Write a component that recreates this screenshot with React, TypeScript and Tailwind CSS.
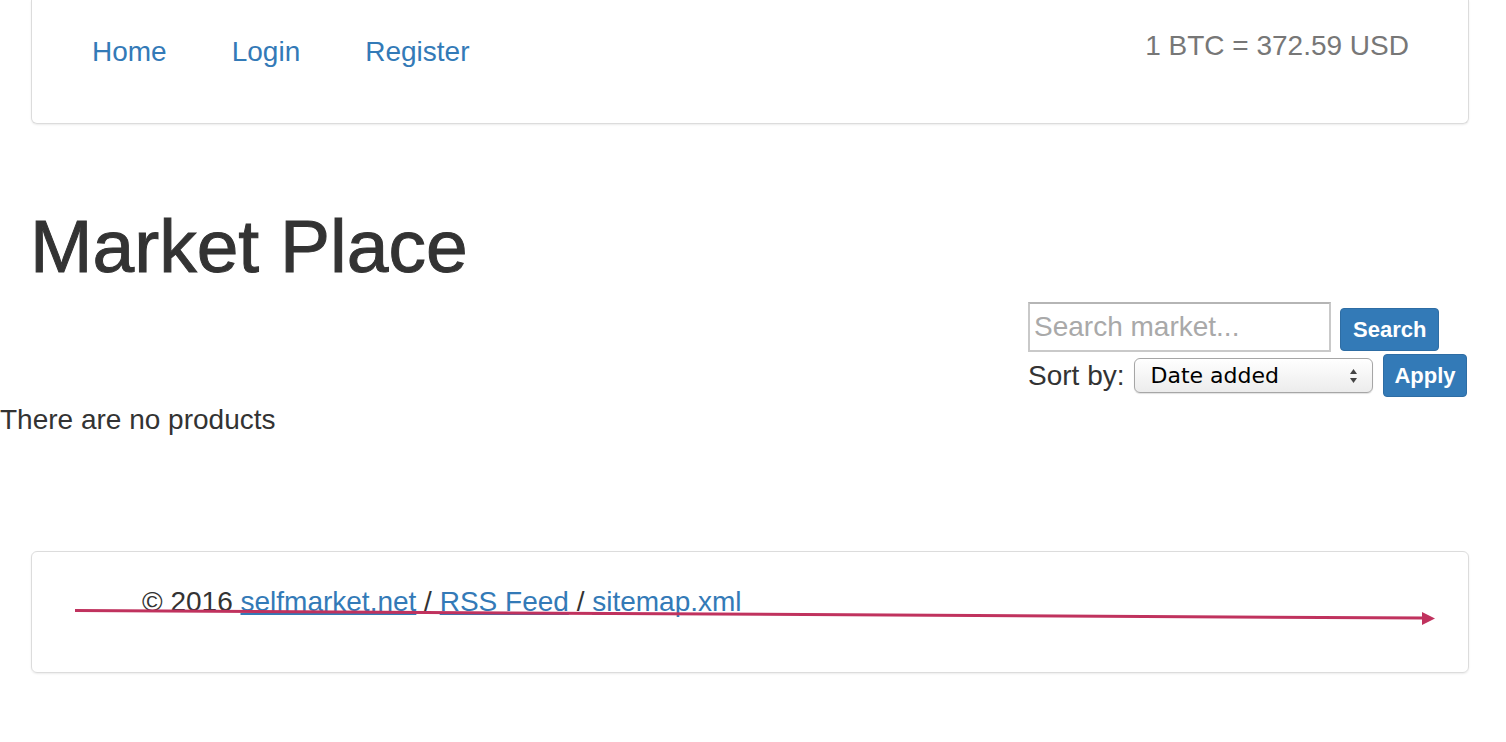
import React from 'react';

const linkCls = 'text-[#337ab7]';

const SortArrows: React.FC = () => (
  <svg width="9" height="16" viewBox="0 0 9 16" className="block">
    <path d="M4.5 1 L8 6 L1 6 Z" fill="#444" />
    <path d="M4.5 15 L8 10 L1 10 Z" fill="#444" />
  </svg>
);

const App: React.FC = () => {
  return (
    <div className="relative min-h-screen bg-white text-[#333] text-[28px] leading-[40px] font-['Liberation_Sans',Arial,sans-serif]">
      <div className="ml-[31px] mr-[37px]">
        {/* top navbar */}
        <nav className="h-[124px] border-x border-b border-[#dcdcdc] rounded-b-[6px] shadow-[0_1px_2px_rgba(0,0,0,0.08)] flex justify-between pl-[60px] pr-[59px]">
          <ul className="flex gap-[65px] pt-[32px]">
            <li><a className={linkCls}>Home</a></li>
            <li><a className={linkCls}>Login</a></li>
            <li><a className={linkCls}>Register</a></li>
          </ul>
          <div className="pt-[26px] text-[#777]">1 BTC = 372.59 USD</div>
        </nav>

        <h1 className="mt-[82px] -ml-px text-[75px] leading-[81px] font-medium text-[#333] [-webkit-text-stroke:1px_#333]">
          Market Place
        </h1>

        {/* search / sort form */}
        <div className="mt-[15px] flex justify-end mr-[2px]">
          <div className="w-[439px] flex flex-col gap-[2px]">
            <div className="flex items-end gap-[9px]">
              <input
                placeholder="Search market..."
                className="w-[303px] h-[50px] border-2 border-[#c9c9c9] border-t-[#b5b5b5] px-[4px] text-[28px] text-[#333] placeholder:text-[#a9a9a9] outline-none"
              />
              <button className="mb-px h-[43px] px-[12px] rounded-[4px] bg-[#337ab7] border border-[#2e6da4] text-white text-[22px] font-bold">
                Search
              </button>
            </div>
            <div className="flex items-center gap-[10px] whitespace-nowrap">
              <span className="shrink-0">Sort by:</span>
              <div className="shrink-0 w-[239px] h-[35px] rounded-[6px] border border-[#a6a6a6] bg-gradient-to-b from-white to-[#ececec] shadow-[0_1px_1px_rgba(0,0,0,0.12)] flex items-center justify-between pl-[15px] pr-[14px] text-black text-[22px] font-['DejaVu_Sans',sans-serif]">
                <span className="leading-none">Date added</span>
                <SortArrows />
              </div>
              <button className="shrink-0 h-[43px] px-[10px] rounded-[4px] bg-[#337ab7] border border-[#2e6da4] text-white text-[22px] font-bold">
                Apply
              </button>
            </div>
          </div>
        </div>
      </div>

      <p className="mt-[3px]">There are no products</p>

      {/* footer */}
      <footer className="mt-[111px] ml-[31px] mr-[37px] border border-[#dcdcdc] rounded-[6px] shadow-[0_1px_2px_rgba(0,0,0,0.08)] pt-[30px] pb-[30px] pl-[110px]">
        <p className="mb-[20px]">
          © 2016 <a className={`${linkCls} underline`}>selfmarket.net</a> /{' '}
          <a className={`${linkCls} underline`}>RSS Feed</a> /{' '}
          <a className={`${linkCls} underline`}>sitemap.xml</a>
        </p>
      </footer>

      {/* annotation arrow drawn over the footer */}
      <svg className="absolute left-0 top-0 pointer-events-none" width="1506" height="742">
        <line x1="75" y1="610.5" x2="1424" y2="618" stroke="#c0325e" strokeWidth="3" />
        <path d="M1422 612 L1435 618.5 L1422 625 Z" fill="#c0325e" />
      </svg>
    </div>
  );
};

export default App;
